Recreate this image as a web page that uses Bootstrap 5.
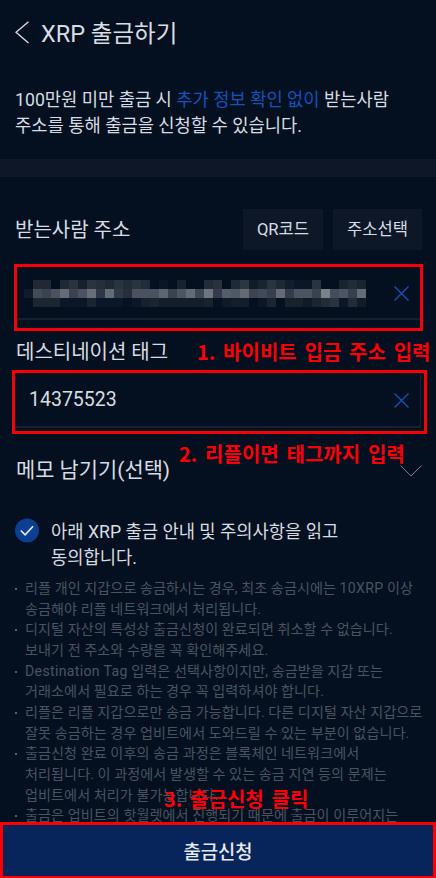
<!DOCTYPE html>
<html lang="ko">
<head>
<meta charset="utf-8">
<meta name="viewport" content="width=device-width, initial-scale=1">
<title>XRP 출금하기</title>
<link href="https://cdn.jsdelivr.net/npm/bootstrap@5.3.0/dist/css/bootstrap.min.css" rel="stylesheet">
<style>
body{background:#04101f;color:#d9dde3;font-family:Roboto,"Noto Sans CJK KR",sans-serif}
.screen{width:436px;height:878px;background:#04101f}
.top-bar{height:64px;padding:0 0 0 15px;gap:12px}
.top-title{font-size:23.5px;line-height:30px;font-weight:400;padding-top:3px}
.intro{height:95px;padding:23px 15px 0;font-size:17.7px;line-height:26px}
.accent{color:#1253bd}
.divider{height:18px;background:#0d1727}
.addr-head{height:87px;padding:32px 14px 14px 15px}
.field-label{font-size:20px;line-height:28px}
.btn-dark-flat{background:#0d1727;color:#d9dde3;border:0;border-radius:0;height:41px;font-size:16.6px;padding:0;line-height:41px}
.btn-qr{width:80px}
.btn-pick{width:89px}
.frame{border:3px solid #f90006}
.frame-addr{height:67px;margin:0 13px 0 14px;padding-left:7px}
.addr-inner{height:53px;border-bottom:2px solid #151f2e;margin-left:-7px;padding:2px 11px 0 7px}
.mosaic{display:grid;grid-template-columns:repeat(38,9px);grid-auto-rows:9px}
.tag-label{height:39px;padding:7px 16px 0}
.frame-tag{height:64px;margin:0 9px 0 12px}
.tag-inner{height:55px;border-bottom:2px solid #17212f;border-right:1px solid #17212f;margin-right:3px;padding:1px 11px 0 14px;font-size:19.5px}
.memo{height:73px;padding:0 14px 0 16px;font-size:20.9px}
.agree{padding:12px 15px 0;gap:12px;font-size:17.7px;line-height:26px;height:71px}
.agree svg{margin-top:-1px}
.notes{font-size:14.1px;line-height:20.65px;letter-spacing:.07px;color:#4b5361;height:244px}
.notes li{padding-left:25px;position:relative}
.notes li::before{content:"";position:absolute;left:15px;top:10px;width:2px;height:2px;background:#58606d}
.wide{letter-spacing:.33px}
.submit{height:57px;background:#08255b;border:3px solid #f90006;border-radius:0;color:#e6eaf1;font-size:18.8px;font-weight:500;padding:10px 0 4px}
.callout{position:absolute;color:#fb0006;font-weight:700;font-size:20px;line-height:28px;word-spacing:2.2px;font-family:"Noto Sans CJK KR",sans-serif}
.c1{left:197px;top:338px}
.c2{left:179px;top:440px}
.c3{left:164px;top:785px}
</style>
<script src="https://cdn.jsdelivr.net/npm/bootstrap@5.3.0/dist/js/bootstrap.bundle.min.js"></script>
</head>
<body>
<main class="screen position-relative overflow-hidden d-flex flex-column text-nowrap">
  <header class="top-bar d-flex align-items-center flex-shrink-0">
    <svg width="14" height="23" viewBox="0 0 14 23" fill="none" stroke="#d9dde3" stroke-width="1.4"><path d="M13.5 .7 1 11.2 13.5 22"/></svg>
    <h1 class="top-title m-0">XRP 출금하기</h1>
  </header>
  <p class="intro m-0 flex-shrink-0">100만원 미만 출금 시 <span class="accent">추가 정보 확인 없이</span> 받는사람<br>주소를 통해 출금을 신청할 수 있습니다.</p>
  <div class="divider flex-shrink-0"></div>

  <section class="addr-head d-flex align-items-center justify-content-between flex-shrink-0">
    <span class="field-label">받는사람 주소</span>
    <div class="d-flex" style="gap:10px">
      <button class="btn btn-dark-flat btn-qr">QR코드</button>
      <button class="btn btn-dark-flat btn-pick">주소선택</button>
    </div>
  </section>
  <div class="frame frame-addr flex-shrink-0">
    <div class="addr-inner d-flex align-items-center justify-content-between">
      <div class="mosaic" id="mosaic"></div>
      <svg width="15" height="15" viewBox="0 0 15 15" stroke="#1253bd" stroke-width="1.3"><path d="M.5.5l14 14M14.5.5l-14 14"/></svg>
    </div>
  </div>

  <div class="tag-label field-label flex-shrink-0">데스티네이션 태그</div>
  <div class="frame frame-tag flex-shrink-0">
    <div class="tag-inner d-flex align-items-center justify-content-between">
      <span>14375523</span>
      <svg width="15" height="15" viewBox="0 0 15 15" stroke="#1253bd" stroke-width="1.3"><path d="M.5.5l14 14M14.5.5l-14 14"/></svg>
    </div>
  </div>

  <div class="memo d-flex align-items-center justify-content-between flex-shrink-0">
    <span>메모 남기기(선택)</span>
    <svg width="22" height="12" viewBox="0 0 22 12" fill="none" stroke="#777f8b" stroke-width="1"><path d="M.5.5 11 11 21.5.5"/></svg>
  </div>

  <label class="agree d-flex align-items-start flex-shrink-0">
    <svg width="24" height="25" viewBox="0 0 24 25"><circle cx="12" cy="12.4" r="12" fill="#0c3f91"/><path d="M5.8 12.5l4.3 4.3 8-8.5" fill="none" stroke="#e8edf5" stroke-width="1.6"/></svg>
    <span>아래 XRP 출금 안내 및 주의사항을 읽고<br>동의합니다.</span>
  </label>
  <ul class="notes list-unstyled m-0 overflow-hidden flex-shrink-0">
    <li>리플 개인 지갑으로 송금하시는 경우, 최초 송금시에는 <span class="wide">10XRP</span> 이상<br>송금해야 리플 네트워크에서 처리됩니다.</li>
    <li>디지털 자산의 특성상 출금신청이 완료되면 취소할 수 없습니다.<br>보내기 전 주소와 수량을 꼭 확인해주세요.</li>
    <li><span class="wide">Destination Tag</span> 입력은 선택사항이지만, 송금받을 지갑 또는<br>거래소에서 필요로 하는 경우 꼭 입력하셔야 합니다.</li>
    <li>리플은 리플 지갑으로만 송금 가능합니다. 다른 디지털 자산 지갑으로<br>잘못 송금하는 경우 업비트에서 도와드릴 수 있는 부분이 없습니다.</li>
    <li>출금신청 완료 이후의 송금 과정은 블록체인 네트워크에서<br>처리됩니다. 이 과정에서 발생할 수 있는 송금 지연 등의 문제는<br>업비트에서 처리가 불가능합니다.</li>
    <li>출금은 업비트의 핫월렛에서 진행되기 때문에 출금이 이루어지는</li>
  </ul>
  <button class="btn submit w-100 flex-shrink-0">출금신청</button>

  <div class="callout c1">1. 바이비트 입금 주소 입력</div>
  <div class="callout c2">2. 리플이면 태그까지 입력</div>
  <div class="callout c3">3. 출금신청 클릭</div>
</main>
<script>
// Shades of the masked address, one row of 38 cells per line; "-" is an empty cell
const rows = [
 "- 1f2834 1f2834 - 1f2833 2a3340 18212d 2a3340 252e3b 1f2834 2a3340 222b38 2a3340 222b38 - 0a1526 - 18222f - - 222b38 28313d - 202a37 2c3542 121c28 1a2430 2a3340 1f2935 141e2b 0b1727 0b1727 2a3340 - - 1a2430 222c38 1a2430",
 "121b29 434b57 3b4351 4b5261 656b76 3b4351 4b5361 686e79 2e3747 656b76 303948 262f3e 4a5160 4a5160 4a5160 5d6571 3a4250 4d5563 656b76 3f4756 6e7480 333c4b 555c6a 505765 656b76 3d4553 424a58 363f4d 656b76 333c4b 4d5461 4d5461 3a4250 7a828a 454d5b 4d5563 363f4d 656b76",
 "- 1c2631 1c2631 1c2631 0a1728 0a1728 0a1728 1a2530 0a1728 0a1728 0a1728 061222 0a1728 17212d 1a2530 141e2a 141e2a 141e2a 141e2a 141e2a 17222d 061222 0e1a28 131e2a 131e2a - 0b1727 1a2530 - 17222d 17222d 0e1a28 1a2530 222c38 2a3340 0b1727 222c38 121c28"
];
const box = document.getElementById("mosaic");
rows.join(" ").split(" ").forEach(c => {
  const cell = document.createElement("i");
  if (c !== "-") cell.style.background = "#" + c;
  box.appendChild(cell);
});
</script>
</body>
</html>
